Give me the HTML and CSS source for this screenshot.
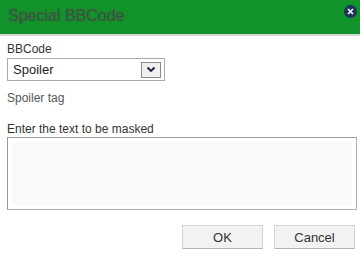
FILE: index.html
```html
<!DOCTYPE html>
<html>
<head>
<meta charset="utf-8">
<link rel="stylesheet" href="styles.css">
</head>
<body>
<div class="dialog">
  <div class="titlebar">
    <span class="title">Special BBCode</span>
    <span class="close"><svg width="7" height="7" viewBox="0 0 7 7"><path d="M1 1L6 6M6 1L1 6" stroke="#fff" stroke-width="1.6"/></svg></span>
  </div>
  <div class="body">
    <div class="label">BBCode</div>
    <div class="select">
      <span class="select-text">Spoiler</span>
      <span class="select-btn"><svg width="10" height="7" viewBox="0 0 10 7"><path d="M1.5 1.5L5 5L8.5 1.5" fill="none" stroke="#1a1a3a" stroke-width="1.8"/></svg></span>
    </div>
    <div class="desc">Spoiler tag</div>
    <div class="label label2">Enter the text to be masked</div>
    <div class="textarea"><div class="textarea-inner"></div></div>
    <div class="buttons">
      <span class="btn">OK</span>
      <span class="btn">Cancel</span>
    </div>
  </div>
</div>
</body>
</html>
```
FILE: styles.css
```css
html, body { margin: 0; padding: 0; background: #fff; }
body { font-family: "Liberation Sans", Arial, sans-serif; width: 360px; height: 257px; overflow: hidden; }
.dialog { display: flex; flex-direction: column; }
.titlebar {
  height: 34px; background: #12922a; border-bottom: 2px solid #d6d6d6;
  display: flex; align-items: center; justify-content: space-between;
  padding: 0 3px 0 8px; box-sizing: content-box;
}
.title { font-size: 16px; color: #4a4a4a; text-shadow: 0 0 2px rgba(0,0,0,0.15); margin-top: -3px; }
.close {
  width: 13px; height: 13px; border-radius: 50%; background: #1e3359;
  display: flex; align-items: center; justify-content: center; margin-top: -12px;
}
.close svg { display: block; }
.body { padding: 6px 5px 0 7px; display: flex; flex-direction: column; }
.label { font-size: 12px; color: #333; line-height: 14px; }
.select {
  margin-top: 2px; width: 158px; height: 23px; box-sizing: border-box;
  border: 1px solid #a9a9a9; display: flex; align-items: center; justify-content: space-between;
  padding: 0 3px 0 5px;
}
.select-text { font-size: 13px; color: #222; }
.select-btn {
  width: 18px; height: 14px; border: 1px solid #8a8a8a; background: #f0f0f0;
  display: flex; align-items: center; justify-content: center;
}
.select-btn svg { display: block; }
.desc { font-size: 12px; color: #555; margin-top: 10px; line-height: 14px; }
.label2 { margin-top: 17px; }
.textarea {
  margin-top: 1px; height: 73px; width: 350px; box-sizing: border-box;
  border: 1px solid #9a9a9a; border-right-color: #b0b0b0; border-bottom-color: #b0b0b0;
  padding: 4px; background: #fff;
}
.textarea-inner { background: #f9f9f9; height: 100%; }
.buttons { display: flex; justify-content: flex-end; gap: 11px; margin-top: 15px; }
.btn {
  width: 81px; height: 24px; box-sizing: border-box; background: #f2f2f2;
  border: 1px solid #d4d4d4; border-bottom-color: #b4b4b4;
  font-size: 13px; color: #333; display: flex; align-items: center; justify-content: center;
}
```
